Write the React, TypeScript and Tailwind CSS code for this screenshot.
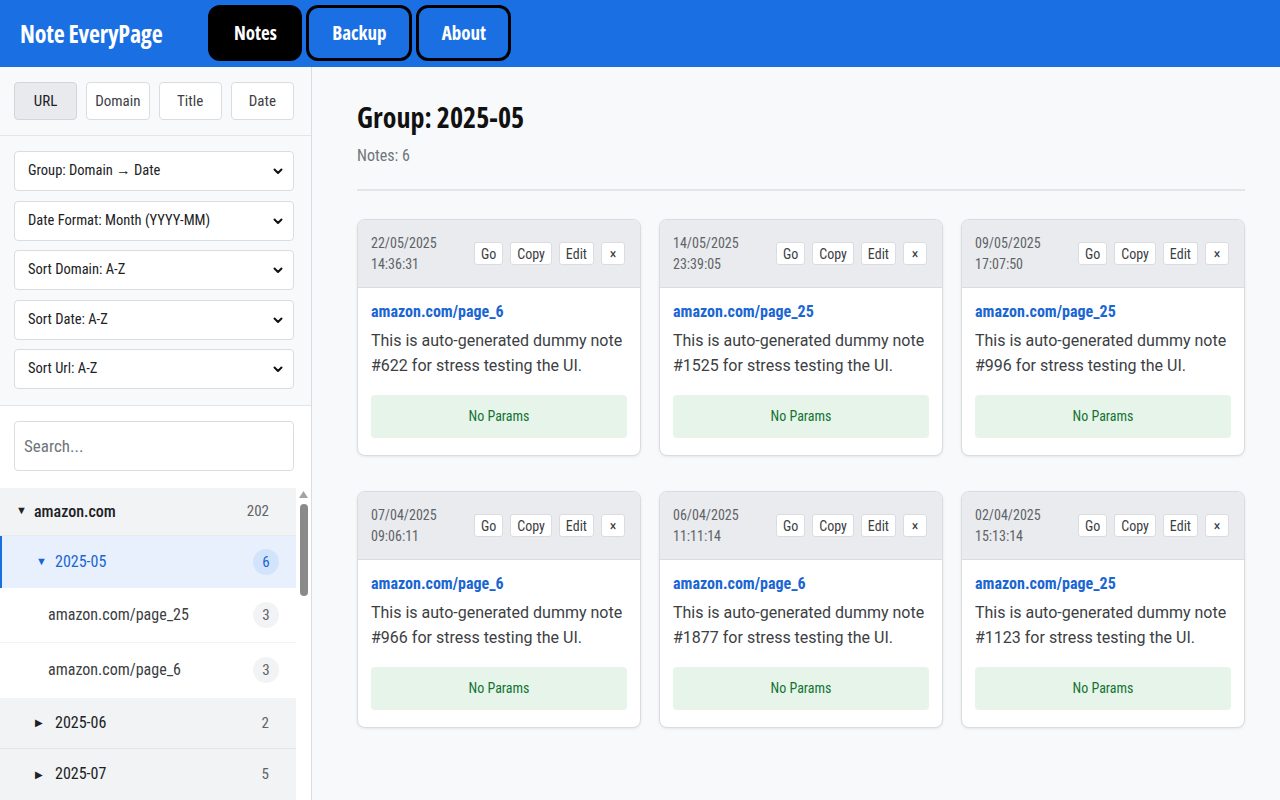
import React from 'react';

interface Note {
  date: string;
  time: string;
  url: string;
  id: number;
}

const notes: Note[] = [
  { date: '22/05/2025', time: '14:36:31', url: 'amazon.com/page_6', id: 622 },
  { date: '14/05/2025', time: '23:39:05', url: 'amazon.com/page_25', id: 1525 },
  { date: '09/05/2025', time: '17:07:50', url: 'amazon.com/page_25', id: 996 },
  { date: '07/04/2025', time: '09:06:11', url: 'amazon.com/page_6', id: 966 },
  { date: '06/04/2025', time: '11:11:14', url: 'amazon.com/page_6', id: 1877 },
  { date: '02/04/2025', time: '15:13:14', url: 'amazon.com/page_25', id: 1123 },
];

const filters = [
  'Group: Domain → Date',
  'Date Format: Month (YYYY-MM)',
  'Sort Domain: A-Z',
  'Sort Date: A-Z',
  'Sort Url: A-Z',
];

// Roboto has a width axis, so font-stretch narrows it like the screenshot
const ctrl = "font-['Roboto','Liberation_Sans',Arial,sans-serif]";
const body = "font-['Roboto','Open_Sans',sans-serif]";

function Chevron() {
  return (
    <svg width="12" height="12" viewBox="0 0 12 12" className="pointer-events-none absolute right-[10px] top-1/2 -translate-y-1/2">
      <path d="M2.5 4.5 L6 8 L9.5 4.5" fill="none" stroke="#111" strokeWidth="2" strokeLinecap="round" strokeLinejoin="round" />
    </svg>
  );
}

function CardButton({ label }: { label: string }) {
  return (
    <button className={`${ctrl} [font-stretch:82%] h-[23px] px-[6px] min-w-[24px] bg-white border border-[#dadce0] rounded-[3px] text-[14px] text-[#3c4043] leading-none`}>
      {label}
    </button>
  );
}

function NoteCard({ note }: { note: Note }) {
  return (
    <div className="bg-white border border-[#dadce0] rounded-[8px] overflow-hidden shadow-[0_1px_3px_rgba(0,0,0,0.08)]">
      <div className="h-[68px] bg-[#e9ebee] border-b border-[#dadce0] flex items-center justify-between pl-[13px] pr-[15px]">
        <div className="text-[14px] leading-[21px] [font-stretch:83%] text-[#5f6368]">
          <div>{note.date}</div>
          <div>{note.time}</div>
        </div>
        <div className="flex gap-[7px]">
          <CardButton label="Go" />
          <CardButton label="Copy" />
          <CardButton label="Edit" />
          <CardButton label="×" />
        </div>
      </div>
      <div className="px-[13px] pt-[12px] pb-[17px]">
        <div className="text-[16px] leading-[24px] font-bold [font-stretch:86%] text-[#1a66d2]">{note.url}</div>
        <p className="text-[16px] leading-[25px] [font-stretch:88%] text-[#3c4043] mt-[4px]">
          This is auto-generated dummy note #{note.id} for stress testing the UI.
        </p>
        <div className="mt-[17px] h-[43px] rounded-[4px] bg-[#e6f4ea] flex items-center justify-center text-[14px] [font-stretch:81%] text-[#137333]">
          No Params
        </div>
      </div>
    </div>
  );
}

function Badge({ value, tone }: { value: string; tone?: 'blue' | 'gray' }) {
  if (!tone) {
    return <span className="w-[28px] text-right text-[15px] [font-stretch:85%] text-[#5f6368]">{value}</span>;
  }
  return (
    <span
      className={`w-[26px] h-[26px] rounded-full flex items-center justify-center text-[15px] [font-stretch:85%] ${
        tone === 'blue' ? 'bg-[#d2e3fc] text-[#1a66d2]' : 'bg-[#f1f3f4] text-[#5f6368]'
      }`}
    >
      {value}
    </span>
  );
}

export default function App() {
  return (
    <div className={`h-screen w-full flex flex-col overflow-hidden ${body} text-[#202124]`}>
      <header className="h-[67px] shrink-0 bg-[#1a6fe3] flex items-center pl-[20px] font-['Open_Sans',sans-serif] font-stretch-semi-condensed">
        <div className="text-[24px] font-bold text-white tracking-[-0.2px]">Note EveryPage</div>
        <nav className="flex items-center gap-[4px] ml-[46px] self-start mt-[5px]">
          <button className="h-[56px] w-[94px] rounded-[12px] bg-black text-white text-[19px] font-bold">Notes</button>
          <button className="h-[56px] w-[106px] rounded-[12px] border-[3px] border-black bg-[#1a6fe3] text-white text-[19px] font-bold">Backup</button>
          <button className="h-[56px] w-[95px] rounded-[12px] border-[3px] border-black bg-[#1a6fe3] text-white text-[19px] font-bold">About</button>
        </nav>
      </header>

      <div className="flex flex-1 min-h-0">
        <aside className="w-[312px] shrink-0 border-r border-[#dadce0] flex flex-col bg-white">
          <div className="bg-[#f8f9fa] pl-[14px] pr-[17px] pt-[15px] pb-[15px] border-b border-[#e3e5e8] grid grid-cols-4 gap-[9px]">
            {['URL', 'Domain', 'Title', 'Date'].map((t, i) => (
              <button
                key={t}
                className={`${ctrl} h-[38px] rounded-[4px] border text-[15px] [font-stretch:77%] ${
                  i === 0 ? 'bg-[#e8eaed] border-[#d3d5d9] text-[#202124]' : 'bg-white border-[#dadce0] text-[#3c4043]'
                }`}
              >
                {t}
              </button>
            ))}
          </div>

          <div className="bg-[#f8f9fa] pl-[14px] pr-[17px] pt-[15px] pb-[16px] border-b border-[#e3e5e8] flex flex-col gap-[9.5px]">
            {filters.map(f => (
              <div key={f} className="relative">
                <select
                  defaultValue={f}
                  className={`${ctrl} appearance-none w-full h-[40px] bg-white border border-[#dadce0] rounded-[4px] pl-[13px] text-[14.5px] [font-stretch:75%] text-[#202124] outline-none`}
                >
                  <option>{f}</option>
                </select>
                <Chevron />
              </div>
            ))}
          </div>

          <div className="pl-[14px] pr-[17px] pt-[15px] pb-[17px] bg-white">
            <input
              placeholder="Search..."
              className="w-full h-[50px] border border-[#dadce0] rounded-[4px] px-[9px] text-[17px] [font-stretch:75%] placeholder:text-[#70757a] outline-none"
            />
          </div>

          <div className="flex flex-1 min-h-0 [font-stretch:82%]">
            <div className="flex-1 flex flex-col">
              <div className="h-[49px] bg-[#f1f3f4] flex items-center pl-[16px] pr-[27px] border-b border-[#e8eaed]">
                <span className="text-[11px] w-[18px] text-[#202124]">▼</span>
                <span className="flex-1 text-[16px] font-medium [font-stretch:78%]">amazon.com</span>
                <Badge value="202" />
              </div>
              <div className="h-[53px] bg-[#e8f0fe] border-l-2 border-[#1a6fe3] flex items-center pl-[34px] pr-[17px]">
                <span className="text-[11px] w-[19px] text-[#1a66d2]">▼</span>
                <span className="flex-1 text-[16px] text-[#1a66d2]">2025-05</span>
                <Badge value="6" tone="blue" />
              </div>
              <div className="h-[56px] bg-white flex items-center pl-[48px] pr-[17px] border-b border-[#f1f3f4]">
                <span className="flex-1 text-[16px] text-[#3c4043]">amazon.com/page_25</span>
                <Badge value="3" tone="gray" />
              </div>
              <div className="h-[56px] bg-white flex items-center pl-[48px] pr-[17px]">
                <span className="flex-1 text-[16px] text-[#3c4043]">amazon.com/page_6</span>
                <Badge value="3" tone="gray" />
              </div>
              <div className="h-[52px] bg-[#f1f3f4] flex items-center pl-[35px] pr-[27px] border-b border-[#e3e5e8]">
                <span className="text-[10px] w-[20px]">▶</span>
                <span className="flex-1 text-[16px]">2025-06</span>
                <Badge value="2" />
              </div>
              <div className="h-[52px] bg-[#f1f3f4] flex items-center pl-[35px] pr-[27px]">
                <span className="text-[10px] w-[20px]">▶</span>
                <span className="flex-1 text-[16px]">2025-07</span>
                <Badge value="5" />
              </div>
            </div>
            <div className="w-[15px] bg-white flex flex-col items-center pt-[3px]">
              <svg width="9" height="7" viewBox="0 0 9 7"><path d="M4.5 0 L9 7 L0 7 Z" fill="#a3a3a3" /></svg>
              <div className="mt-[6px] w-[8px] h-[92px] rounded-full bg-[#8a8a8a]" />
            </div>
          </div>
        </aside>

        <main className="flex-1 bg-[#f8f9fa] pl-[45px] pr-[35px] pt-[32px] overflow-hidden">
          <h1 className="text-[28px] leading-[36px] font-bold text-[#111] font-['Open_Sans',sans-serif] font-stretch-semi-condensed">Group: 2025-05</h1>
          <div className="mt-[9px] text-[16px] [font-stretch:84%] text-[#70757a]">Notes: 6</div>
          <div className="mt-[21px] border-t-2 border-[#e3e5e8]" />
          <div className="mt-[28px] grid grid-cols-3 gap-x-[18px] gap-y-[35px]">
            {notes.map(n => (
              <NoteCard key={n.id} note={n} />
            ))}
          </div>
        </main>
      </div>
    </div>
  );
}
